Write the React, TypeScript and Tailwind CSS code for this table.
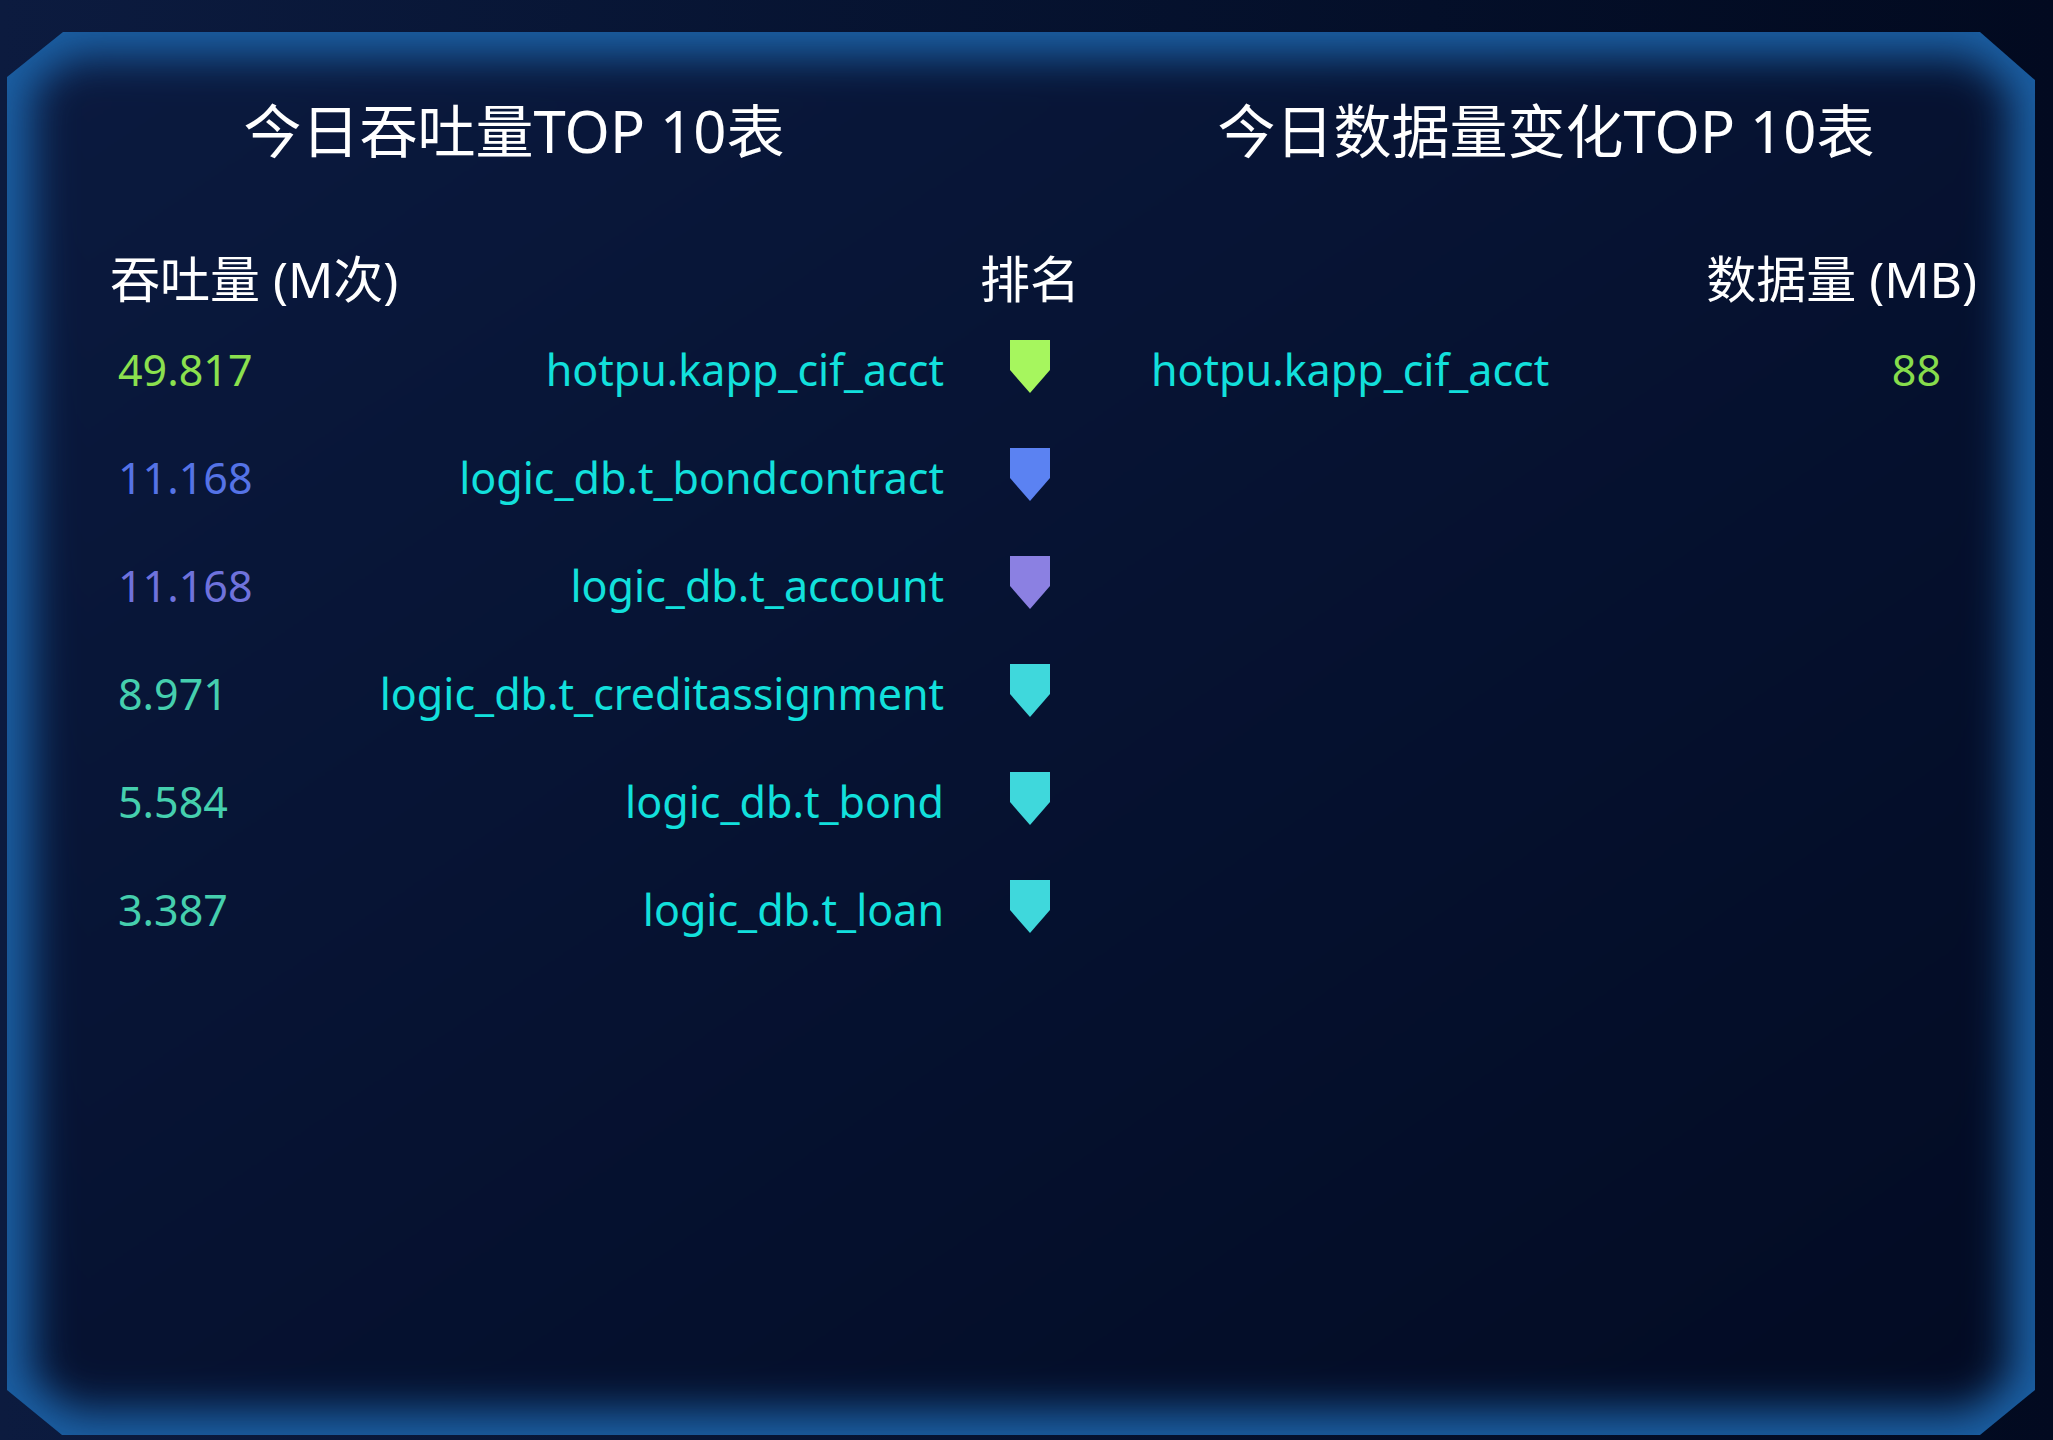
import React from 'react'

const rows = [
  { v: '49.817', name: 'hotpu.kapp_cif_acct', vc: 'text-[#8be04e]', mc: '#a6f65e' },
  { v: '11.168', name: 'logic_db.t_bondcontract', vc: 'text-[#5573e6]', mc: '#5b82f2' },
  { v: '11.168', name: 'logic_db.t_account', vc: 'text-[#6f72dc]', mc: '#8b80e2' },
  { v: '8.971', name: 'logic_db.t_creditassignment', vc: 'text-[#45cfae]', mc: '#3fd8dc' },
  { v: '5.584', name: 'logic_db.t_bond', vc: 'text-[#45cfae]', mc: '#3fd8dc' },
  { v: '3.387', name: 'logic_db.t_loan', vc: 'text-[#45cfae]', mc: '#3fd8dc' },
]

const right = [{ name: 'hotpu.kapp_cif_acct', v: '88' }]

function Marker({ color }: { color: string }) {
  return (
    <svg width="40" height="53" viewBox="0 0 40 53" className="-mt-[7px]">
      <polygon points="0,0 40,0 40,30 20,53 0,30" fill={color} />
    </svg>
  )
}

export default function App() {
  return (
    <div className="w-[2053px] h-[1440px] overflow-hidden bg-linear-to-r from-[#0c1b3f] to-[#020a20] pt-[32px] pl-[7px] font-['Noto_Sans','Noto_Sans_CJK_SC',sans-serif] text-white">
      <div className="relative w-[2028px] h-[1403px]">
        {/* frame with inner glow */}
        <div className="absolute inset-0 bg-[#1b5fa3] [clip-path:polygon(56px_0,calc(100%_-_55px)_0,100%_48px,100%_calc(100%_-_45px),calc(100%_-_55px)_100%,55px_100%,0_calc(100%_-_45px),0_45px)]">
          <div className="absolute inset-0 blur-[20px]">
            <div className="absolute inset-[25px] bg-linear-to-br from-[#0b1a3f] via-[#061231] to-[#030b23] [clip-path:polygon(40px_0,calc(100%_-_40px)_0,100%_34px,100%_calc(100%_-_32px),calc(100%_-_40px)_100%,40px_100%,0_calc(100%_-_32px),0_32px)]" />
          </div>
        </div>

        <div className="relative flex flex-col">
          <div className="flex pt-[59px] text-[58px] leading-[80px] whitespace-nowrap">
            <div className="w-[1014px] text-center">今日吞吐量TOP 10表</div>
            <div className="flex-1 pl-[36px] text-center">今日数据量变化TOP 10表</div>
          </div>

          <div className="mt-[78px] flex pl-[103px] pr-[58px] text-[50px] leading-[60px] whitespace-nowrap">
            <div className="w-[834px]">吞吐量 (M次)</div>
            <div className="w-[172px] text-center">排名</div>
            <div className="flex-1 text-right">数据量 (MB)</div>
          </div>

          <div className="mt-[7px] flex flex-col pl-[103px] pr-[58px] text-[43px]">
            {rows.map((r, i) => (
              <div key={i} className="flex h-[108px] items-center whitespace-nowrap">
                <div className={`w-[240px] pl-[8px] ${r.vc}`}>{r.v}</div>
                <div className="w-[594px] text-right text-[#12e0dc]">{r.name}</div>
                <div className="flex w-[172px] justify-center">
                  <Marker color={r.mc} />
                </div>
                <div className="flex-1 pl-[35px] text-[#12e0dc]">{right[i]?.name ?? ''}</div>
                <div className="w-[200px] pr-[36px] text-right text-[#86dc4c]">{right[i]?.v ?? ''}</div>
              </div>
            ))}
          </div>
        </div>
      </div>
    </div>
  )
}
